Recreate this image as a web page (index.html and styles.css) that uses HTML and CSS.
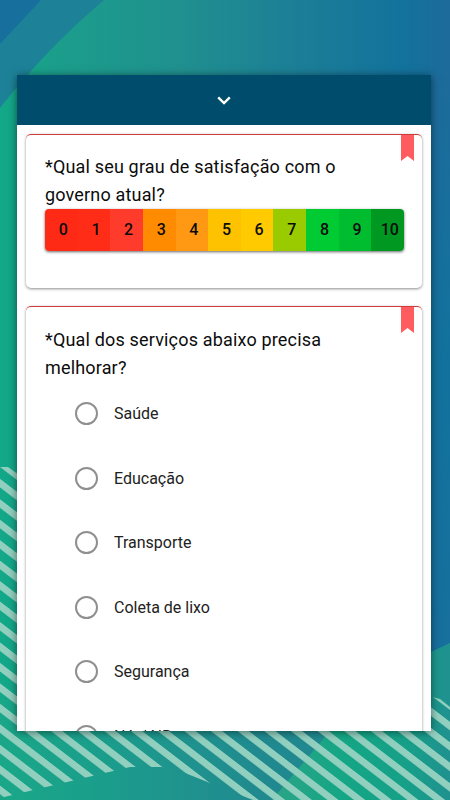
FILE: index.html
```
<!DOCTYPE html>
<html lang="pt-BR">
<head>
    <meta charset="UTF-8">
    <meta name="viewport" content="width=device-width, initial-scale=1.0">
    <title>Pesquisa de Satisfação</title>
    <link rel="stylesheet" href="styles.css">
</head>
<body>
    <!-- Fundo decorativo -->
    <svg class="background" viewBox="0 0 450 800" preserveAspectRatio="none" aria-hidden="true">
        <defs>
            <linearGradient id="sky" x1="0" y1="0" x2="1" y2="0">
                <stop offset="0" stop-color="#12a888"/>
                <stop offset="0.12" stop-color="#1b9e8b"/>
                <stop offset="0.4" stop-color="#20908f"/>
                <stop offset="0.7" stop-color="#1b7c98"/>
                <stop offset="0.9" stop-color="#13729c"/>
                <stop offset="1" stop-color="#1d6b9b"/>
            </linearGradient>
            <linearGradient id="side" x1="0" y1="0" x2="0" y2="1">
                <stop offset="0" stop-color="#1d6b9b"/>
                <stop offset="0.5" stop-color="#12729d"/>
                <stop offset="1" stop-color="#176f9d"/>
            </linearGradient>
            <linearGradient id="ground" x1="0" y1="0" x2="1" y2="0">
                <stop offset="0" stop-color="#1aa788"/>
                <stop offset="0.2" stop-color="#1a9f8b"/>
                <stop offset="0.4" stop-color="#1f938e"/>
                <stop offset="0.6" stop-color="#20898f"/>
                <stop offset="1" stop-color="#20898f"/>
            </linearGradient>
            <linearGradient id="hill" x1="0" y1="0" x2="1" y2="0">
                <stop offset="0" stop-color="#2ba487"/>
                <stop offset="0.4" stop-color="#14a685"/>
                <stop offset="0.75" stop-color="#16a088"/>
                <stop offset="1" stop-color="#20918f"/>
            </linearGradient>
            <pattern id="stripes" width="30" height="20.45" patternUnits="userSpaceOnUse" patternTransform="translate(0 683.3) skewY(37.5)">
                <rect width="30" height="8.6" fill="#91cfbf"/>
            </pattern>
        </defs>
        <rect width="450" height="800" fill="url(#sky)"/>
        <rect x="425" y="75" width="25" height="580" fill="url(#side)"/>
        <path d="M0 108Q45 50 104 0H0Z" fill="#1d8298"/>
        <path d="M0 44L41 0H0Z" fill="#176f9d"/>
        <path d="M0 700H425V655L450 643V800H0Z" fill="url(#ground)"/>
        <path d="M272 800L335 725L425 655L450 643V800Z" fill="url(#hill)"/>
        <path d="M0 467H8L40 490V731H450V800H253L210 783L185 773L162 767L130 767L0 798Z" fill="url(#stripes)"/>
        <path d="M425 695L440 699L450 707V732H425Z" fill="url(#stripes)"/>
    </svg>

    <div class="phone">
        <div class="topbar">
            <svg class="chevron" viewBox="0 0 14 9"><path d="M1.2 1.3L7 7L12.8 1.3"/></svg>
        </div>
        <div class="questions">
            <div class="card">
                <svg class="bookmark" viewBox="0 0 13 26"><path d="M0 0H13V26L6.5 21L0 26Z"/></svg>
                <h2>*Qual seu grau de satisfação com o governo atual?</h2>
                <div class="scale">
                    <span class="n0">0</span>
                    <span class="n1">1</span>
                    <span class="n2">2</span>
                    <span class="n3">3</span>
                    <span class="n4">4</span>
                    <span class="n5">5</span>
                    <span class="n6">6</span>
                    <span class="n7">7</span>
                    <span class="n8">8</span>
                    <span class="n9">9</span>
                    <span class="n10">10</span>
                </div>
            </div>

            <div class="card card-options">
                <svg class="bookmark" viewBox="0 0 13 26"><path d="M0 0H13V26L6.5 21L0 26Z"/></svg>
                <h2>*Qual dos serviços abaixo precisa melhorar?</h2>
                <label class="option"><input type="radio" name="servico">Saúde</label>
                <label class="option"><input type="radio" name="servico">Educação</label>
                <label class="option"><input type="radio" name="servico">Transporte</label>
                <label class="option"><input type="radio" name="servico">Coleta de lixo</label>
                <label class="option"><input type="radio" name="servico">Segurança</label>
                <label class="option"><input type="radio" name="servico">NA / NR</label>
            </div>
        </div>
    </div>
</body>
</html>
```
FILE: styles.css
```
* {
    box-sizing: border-box;
}
body {
    font-family: Roboto, sans-serif;
    margin: 0;
    height: 800px;
    padding: 75px 19px 69px 17px;
    overflow: hidden;
    color: #0c0c0c;
}
.background {
    position: absolute;
    top: 0;
    left: 0;
    width: 450px;
    height: 800px;
    z-index: -1;
}
.phone {
    display: flex;
    flex-direction: column;
    height: 656px;
    background: white;
    overflow: hidden;
    box-shadow: 0 1px 8px rgba(0,0,0,0.5);
}
.topbar {
    display: flex;
    flex: none;
    align-items: center;
    justify-content: center;
    height: 50px;
    background-color: #004c6c;
}
.chevron {
    width: 14px;
    height: 9px;
    fill: none;
    stroke: white;
    stroke-width: 2.4;
}
.questions {
    padding: 9px 9px 0;
}
.card {
    position: relative;
    height: 154px;
    padding: 18px 18px 0 19px;
    margin-bottom: 18px;
    border-top: 1px solid #d33b3b;
    border-radius: 5px;
    box-shadow: 0 1px 3px rgba(0,0,0,0.45);
}
.card-options {
    height: 500px;
    padding-top: 19px;
}
.bookmark {
    position: absolute;
    top: 0;
    right: 8px;
    width: 13px;
    height: 26px;
    fill: #ff5c60;
}
h2 {
    margin: 0 0 1px;
    font-size: 18px;
    font-weight: 400;
    line-height: 27.5px;
    letter-spacing: 0.17px;
}
.scale {
    display: flex;
    height: 42px;
    border-radius: 4px;
    overflow: hidden;
    box-shadow: 0 1px 3px rgba(0,0,0,0.6);
    font-size: 16px;
    font-weight: 500;
    line-height: 42px;
}
.scale span {
    flex: 1;
    padding-left: 4px;
    text-align: center;
}
.n0 { background: #ff2a16; }
.n1 { background: #ff2d18; }
.n2 { background: #ff3b2b; }
.n3 { background: #ff8c00; }
.n4 { background: #ff9914; }
.n5 { background: #ffc200; }
.n6 { background: #ffcb00; }
.n7 { background: #99cb00; }
.n8 { background: #00cb32; }
.n9 { background: #00bd2f; }
.n10 { background: #009820; }
.card-options h2 {
    margin-bottom: 0.5px;
}
.option {
    display: flex;
    align-items: center;
    gap: 16px;
    height: 64.5px;
    padding-left: 30px;
    font-size: 16px;
    color: #222;
}
.option input {
    appearance: none;
    width: 23px;
    height: 23px;
    margin: 0;
    border: 2px solid #8f8f8f;
    border-radius: 50%;
}
```
